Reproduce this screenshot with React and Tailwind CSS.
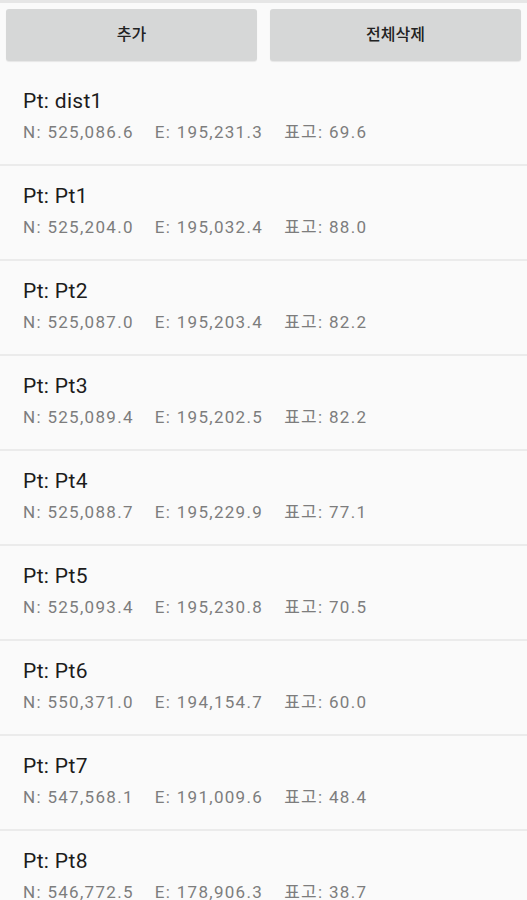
import React from "react";

const points = [
  { name: "dist1", n: "525,086.6", e: "195,231.3", h: "69.6" },
  { name: "Pt1", n: "525,204.0", e: "195,032.4", h: "88.0" },
  { name: "Pt2", n: "525,087.0", e: "195,203.4", h: "82.2" },
  { name: "Pt3", n: "525,089.4", e: "195,202.5", h: "82.2" },
  { name: "Pt4", n: "525,088.7", e: "195,229.9", h: "77.1" },
  { name: "Pt5", n: "525,093.4", e: "195,230.8", h: "70.5" },
  { name: "Pt6", n: "550,371.0", e: "194,154.7", h: "60.0" },
  { name: "Pt7", n: "547,568.1", e: "191,009.6", h: "48.4" },
  { name: "Pt8", n: "546,772.5", e: "178,906.3", h: "38.7" },
];

const App = () => {
  return (
    <div className="min-h-screen w-[527px] bg-[#fafafa] overflow-hidden font-['Roboto','Noto_Sans_CJK_KR',sans-serif]">
      {/* 상단 그림자 라인 */}
      <div className="h-[3px] bg-[#e6e6e6]" />

      {/* 버튼 */}
      <div className="flex gap-[13px] px-[6px] pt-[6px]">
        <button className="flex-1 h-[52px] rounded-[3px] bg-[#d6d7d7] text-[16px] font-medium text-[#222] shadow-[0_1px_1px_rgba(0,0,0,0.08)]">
          추가
        </button>
        <button className="flex-1 h-[52px] rounded-[3px] bg-[#d6d7d7] text-[16px] font-medium text-[#222] shadow-[0_1px_1px_rgba(0,0,0,0.08)]">
          전체삭제
        </button>
      </div>

      {/* 목록 */}
      <ul className="mt-[10px]">
        {points.map((p) => (
          <li
            key={p.name}
            className="h-[95px] px-[23px] pt-[16px] border-b-2 border-[#ebebeb]"
          >
            <p className="text-[21px] leading-[28px] text-[#1c1c1c] tracking-[0.3px]">
              Pt: {p.name}
            </p>
            <div className="mt-[5px] flex gap-[21px] text-[17px] leading-[24px] text-[#7d7d7d] tracking-[1.3px]">
              <span>N: {p.n}</span>
              <span>E: {p.e}</span>
              <span>표고: {p.h}</span>
            </div>
          </li>
        ))}
      </ul>
    </div>
  );
};

export default App;
